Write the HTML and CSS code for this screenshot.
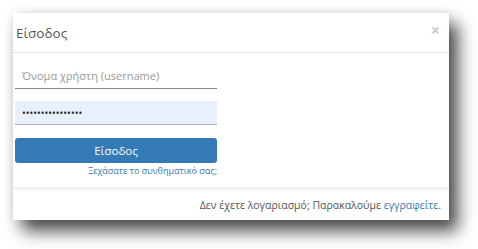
FILE: index.html
```html
<!DOCTYPE html>
<html lang="el">

<head>
    <meta charset="UTF-8">
    <meta name="viewport" content="width=device-width, initial-scale=1.0">
    <title>Είσοδος</title>
    <link rel="stylesheet" href="styles.css">
</head>

<body>
    <div class="modal">
        <div class="modal-header">
            <h4 class="modal-title">Είσοδος</h4>
            <span class="close">&times;</span>
        </div>
        <div class="modal-body">
            <form class="login-form">
                <input class="field" type="text" placeholder="Όνομα χρήστη (username)">
                <input class="field field-pass" type="password" value="xxxxxxxxxxxxxxxx">
                <button class="btn-login" type="button">Είσοδος</button>
                <a class="forgot" href="#">Ξεχάσατε το συνθηματικό σας;</a>
            </form>
        </div>
        <div class="modal-footer">
            <p>Δεν έχετε λογαριασμό; Παρακαλούμε <a href="#">εγγραφείτε</a>.</p>
        </div>
    </div>
</body>

</html>
```

FILE: styles.css
```css
html,
body {
    margin: 0;
    height: 100%;
    background: #fff;
}

body {
    box-sizing: border-box;
    min-height: 249px;
    padding: 13px 0 0 13px;
    font-family: 'Open Sans', 'Noto Sans', sans-serif;
    color: #333;
}

.modal {
    width: 436px;
    height: 207px;
    background: #fff;
    display: flex;
    flex-direction: column;
    box-shadow:
        0px 0px 10px rgba(0, 0, 0, 0.1),
        9px 11px 16px rgba(0, 0, 0, 0.7);
}

.modal-header {
    height: 39px;
    border-bottom: 1px solid #e5e5e5;
    display: flex;
    align-items: center;
    justify-content: space-between;
    padding: 0 9px 0 3px;
}

.modal-title {
    margin: 0;
    font-size: 13.5px;
    font-weight: normal;
    color: #555;
}

.close {
    color: #c8c8c8;
    font-size: 16px;
    font-weight: bold;
    margin-top: -6px;
}

.modal-body {
    flex: 1;
    padding: 9px 2px 0;
}

.login-form {
    width: 202px;
    display: flex;
    flex-direction: column;
}

.field {
    box-sizing: border-box;
    height: 27px;
    border: none;
    border-bottom: 1px solid #8a8a8a;
    padding: 0 7px;
    font-family: inherit;
    font-size: 11px;
    color: #333;
    outline: none;
}

.field::placeholder {
    color: #999;
}

.field-pass {
    height: 24px;
    margin-top: 12px;
    background: #e8f0fe;
    border-bottom-color: #a9b4c4;
    font-size: 10px;
    color: #222;
}

.btn-login {
    margin-top: 13px;
    height: 25px;
    border: none;
    border-radius: 3px;
    background: #337ab7;
    color: #fff;
    font-family: inherit;
    font-size: 11.5px;
}

.forgot {
    align-self: flex-end;
    margin-top: 1px;
    font-size: 9px;
    color: #337ab7;
    text-decoration: none;
}

.modal-footer {
    height: 30px;
    border-top: 3px solid #f2f2f2;
    display: flex;
    align-items: center;
    justify-content: flex-end;
    padding-right: 8px;
    font-size: 10.5px;
    color: #555;
}

.modal-footer p {
    margin: 0;
}

.modal-footer a {
    color: #337ab7;
    text-decoration: none;
}
```
